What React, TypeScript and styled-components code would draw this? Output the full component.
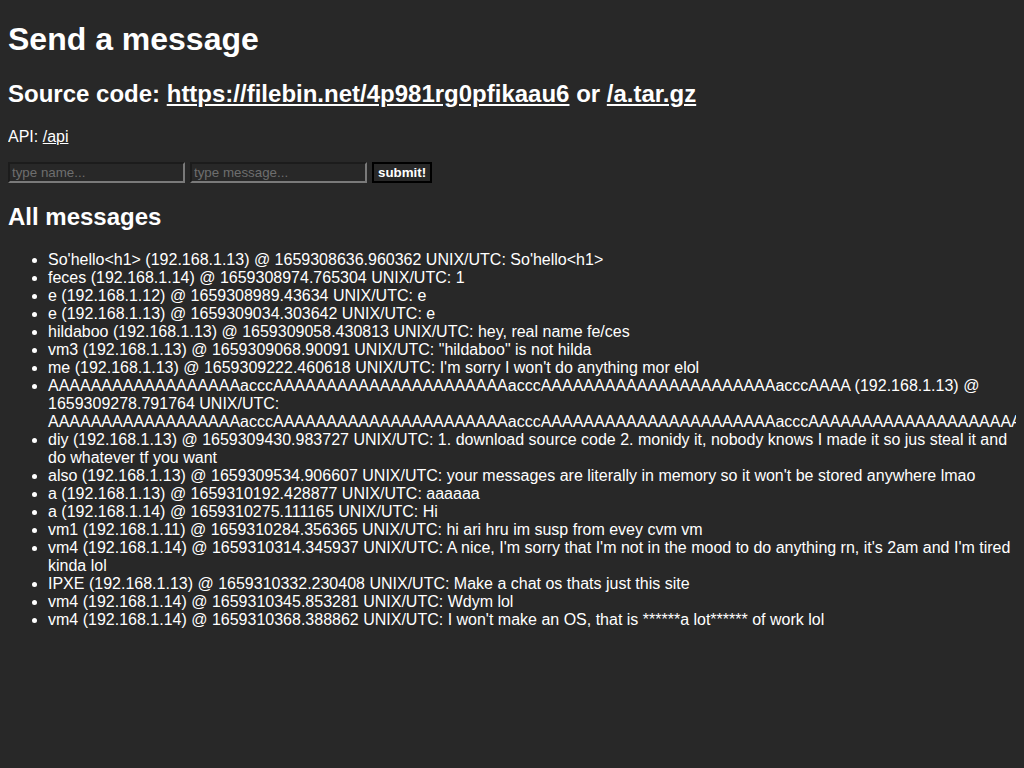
import React from 'react';
import styled, { createGlobalStyle } from 'styled-components';

type Message = {
  name: string;
  ip: string;
  time: string;
  text: string;
};

const A = (n: number) => 'A'.repeat(n);

const messages: Message[] = [
  { name: "So'hello<h1>", ip: '192.168.1.13', time: '1659308636.960362', text: "So'hello<h1>" },
  { name: 'feces', ip: '192.168.1.14', time: '1659308974.765304', text: '1' },
  { name: 'e', ip: '192.168.1.12', time: '1659308989.43634', text: 'e' },
  { name: 'e', ip: '192.168.1.13', time: '1659309034.303642', text: 'e' },
  { name: 'hildaboo', ip: '192.168.1.13', time: '1659309058.430813', text: 'hey, real name fe/ces' },
  { name: 'vm3', ip: '192.168.1.13', time: '1659309068.90091', text: '"hildaboo" is not hilda' },
  { name: 'me', ip: '192.168.1.13', time: '1659309222.460618', text: "I'm sorry I won't do anything mor elol" },
  {
    name: `${A(18)}accc${A(22)}accc${A(22)}acccAAAA`,
    ip: '192.168.1.13',
    time: '1659309278.791764',
    text: `${A(18)}accc${A(22)}accc${A(22)}accc${A(28)}`,
  },
  {
    name: 'diy',
    ip: '192.168.1.13',
    time: '1659309430.983727',
    text: '1. download source code 2. monidy it, nobody knows I made it so jus steal it and do whatever tf you want',
  },
  {
    name: 'also',
    ip: '192.168.1.13',
    time: '1659309534.906607',
    text: "your messages are literally in memory so it won't be stored anywhere lmao",
  },
  { name: 'a', ip: '192.168.1.13', time: '1659310192.428877', text: 'aaaaaa' },
  { name: 'a', ip: '192.168.1.14', time: '1659310275.111165', text: 'Hi' },
  { name: 'vm1', ip: '192.168.1.11', time: '1659310284.356365', text: 'hi ari hru im susp from evey cvm vm' },
  {
    name: 'vm4',
    ip: '192.168.1.14',
    time: '1659310314.345937',
    text: "A nice, I'm sorry that I'm not in the mood to do anything rn, it's 2am and I'm tired kinda lol",
  },
  { name: 'IPXE', ip: '192.168.1.13', time: '1659310332.230408', text: 'Make a chat os thats just this site' },
  { name: 'vm4', ip: '192.168.1.14', time: '1659310345.853281', text: 'Wdym lol' },
  { name: 'vm4', ip: '192.168.1.14', time: '1659310368.388862', text: "I won't make an OS, that is ******a lot****** of work lol" },
];

const GlobalStyle = createGlobalStyle`
  html {
    background: #282828;
  }

  body {
    margin: 0 8px 8px;
    background: #282828;
    color: #ffffff;
    font-family: "Liberation Sans", Arial, sans-serif;
    font-size: 16px;
  }
`;

const Title = styled.h1`
  font-size: 2em;
  font-weight: bold;
  margin: 0.67em 0;
`;

const SubTitle = styled.h2`
  font-size: 1.5em;
  font-weight: bold;
  margin: 0.83em 0;
`;

const Paragraph = styled.p`
  margin: 1em 0;
`;

const Link = styled.a`
  color: #ffffff;
  text-decoration: underline;
`;

const SendForm = styled.form`
  display: flex;
  align-items: center;
  gap: 5px;
  margin: 0;
`;

const Field = styled.input`
  box-sizing: border-box;
  width: 177px;
  height: 21px;
  padding: 1px 2px;
  background: #282828;
  color: #ffffff;
  font-family: "Liberation Sans", Arial, sans-serif;
  font-size: 13.33px;
  border-style: solid;
  border-width: 2px;
  border-color: #1c1c1c #7a7a7a #7a7a7a #1c1c1c;
  outline: none;

  &::placeholder {
    color: #6e6e6e;
  }
`;

const Submit = styled.button`
  box-sizing: border-box;
  height: 21px;
  padding: 0 4px;
  background: #282828;
  color: #ffffff;
  font-family: "Liberation Sans", Arial, sans-serif;
  font-size: 13.33px;
  font-weight: bold;
  border: 2px solid #000000;
  cursor: pointer;
`;

const MessageList = styled.ul`
  margin: 1em 0;
  padding-left: 40px;
  list-style: disc;
`;

const MessageItem = styled.li`
  line-height: 18px;
`;

export default function App() {
  return (
    <>
      <GlobalStyle />
      <Title>Send a message</Title>
      <SubTitle>
        Source code: <Link href="#">https://filebin.net/4p981rg0pfikaau6</Link> or{' '}
        <Link href="#">/a.tar.gz</Link>
      </SubTitle>
      <Paragraph>
        API: <Link href="#">/api</Link>
      </Paragraph>
      <SendForm onSubmit={(e) => e.preventDefault()}>
        <Field placeholder="type name..." />
        <Field placeholder="type message..." />
        <Submit type="submit">submit!</Submit>
      </SendForm>
      <SubTitle>All messages</SubTitle>
      <MessageList>
        {messages.map((m, i) => (
          <MessageItem key={i}>
            {m.name} ({m.ip}) @ {m.time} UNIX/UTC: {m.text}
          </MessageItem>
        ))}
      </MessageList>
    </>
  );
}
